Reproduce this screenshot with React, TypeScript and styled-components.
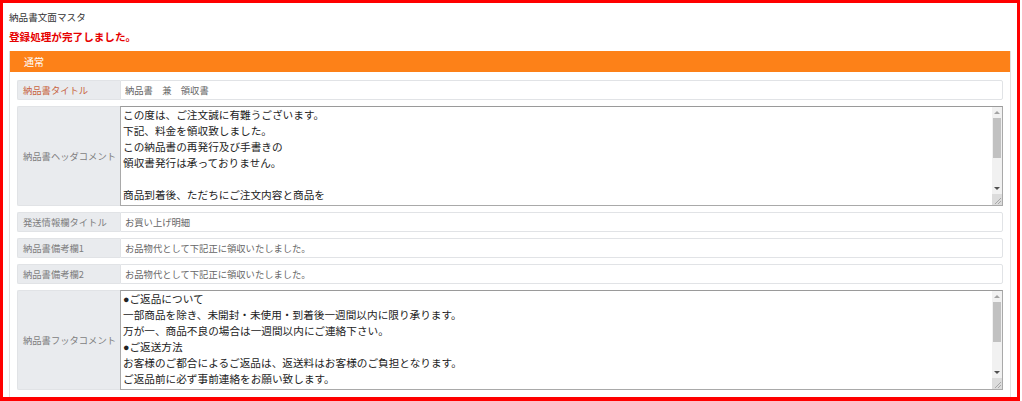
import styled, { createGlobalStyle } from 'styled-components';

const GlobalStyle = createGlobalStyle`
    html, body {
        margin: 0;
        padding: 0;
        background: #ffffff;
    }
    body {
        font-family: "Noto Sans CJK JP", "Noto Sans", sans-serif;
    }
`;

const headerComment = `この度は、ご注文誠に有難うございます。
下記、料金を領収致しました。
この納品書の再発行及び手書きの
領収書発行は承っておりません。

商品到着後、ただちにご注文内容と商品を
ご確認下さい。
万一、不備がございましたらご連絡下さい。`;

const footerComment = `●ご返品について
一部商品を除き、未開封・未使用・到着後一週間以内に限り承ります。
万が一、商品不良の場合は一週間以内にご連絡下さい。
●ご返送方法
お客様のご都合によるご返品は、返送料はお客様のご負担となります。
ご返品前に必ず事前連絡をお願い致します。
今後ともよろしくお願い申し上げます。`;

interface FieldRow {
    label: string;
    value: string;
    multi?: boolean;
    required?: boolean;
}

const rows: FieldRow[] = [
    { label: '納品書タイトル', value: '納品書　兼　領収書', required: true },
    { label: '納品書ヘッダコメント', value: headerComment, multi: true },
    { label: '発送情報欄タイトル', value: 'お買い上げ明細' },
    { label: '納品書備考欄1', value: 'お品物代として下記正に領収いたしました。' },
    { label: '納品書備考欄2', value: 'お品物代として下記正に領収いたしました。' },
    { label: '納品書フッタコメント', value: footerComment, multi: true },
];

// textarea scrollbar is drawn by hand so it looks the same as the classic one
const FakeScrollbar = () => (
    <ScrollBar>
        <ArrowButton>
            <UpArrow />
        </ArrowButton>
        <Track>
            <Thumb />
        </Track>
        <ArrowButton>
            <DownArrow />
        </ArrowButton>
        <Grip>
            <svg width="10" height="10" viewBox="0 0 10 10">
                <line x1="9" y1="3" x2="3" y2="9" stroke="#a8a8a8" strokeWidth="1" />
                <line x1="9" y1="6" x2="6" y2="9" stroke="#a8a8a8" strokeWidth="1" />
            </svg>
        </Grip>
    </ScrollBar>
);

const App = () => {
    return (
        <>
            <GlobalStyle />
            <Frame>
                <PageTitle>納品書文面マスタ</PageTitle>
                <Message>登録処理が完了しました。</Message>
                <Panel>
                    <PanelHeader>通常</PanelHeader>
                    <PanelBody>
                        {rows.map((row) => (
                            <Row key={row.label} $multi={row.multi}>
                                <Label $required={row.required}>{row.label}</Label>
                                {row.multi ? (
                                    <AreaWrap>
                                        <Area defaultValue={row.value} />
                                        <FakeScrollbar />
                                    </AreaWrap>
                                ) : (
                                    <TextInput defaultValue={row.value} />
                                )}
                            </Row>
                        ))}
                    </PanelBody>
                </Panel>
            </Frame>
        </>
    );
};

export default App;

const Frame = styled.div`
    box-sizing: border-box;
    width: 1020px;
    height: 401px;
    border: 3px solid #ff0000;
    border-bottom-width: 4px;
    padding: 7px 6px 0 6px;
    overflow: hidden;
    background: #ffffff;
`;

const PageTitle = styled.div`
    font-size: 9.6px;
    line-height: 14px;
    color: #333333;
`;

const Message = styled.div`
    margin-top: 6px;
    font-size: 10.6px;
    line-height: 14px;
    font-weight: bold;
    color: #e60000;
`;

const Panel = styled.div`
    margin-top: 7px;
    border: 1px solid #e2e2e2;
    border-top: none;
    background: #ffffff;
`;

const PanelHeader = styled.div`
    height: 21px;
    line-height: 21px;
    padding-left: 14px;
    background: #fd8118;
    color: #ffffff;
    font-size: 10px;
`;

const PanelBody = styled.div`
    display: flex;
    flex-direction: column;
    gap: 6px;
    padding: 8px 7px 8px 7px;
`;

interface RowProps {
    $multi?: boolean;
}

const Row = styled.div<RowProps>`
    display: grid;
    grid-template-columns: 103px 1fr;
    height: ${(props) => (props.$multi ? '100px' : '20px')};
`;

interface LabelProps {
    $required?: boolean;
}

const Label = styled.div<LabelProps>`
    display: flex;
    align-items: center;
    padding-left: 5px;
    background: #e9ebee;
    border: 1px solid #e1e3e6;
    border-right: none;
    border-radius: 2px 0 0 2px;
    font-size: 9.3px;
    color: ${(props) => (props.$required ? '#c8643f' : '#7e7e7e')};
    white-space: nowrap;
`;

const TextInput = styled.input`
    box-sizing: border-box;
    width: 100%;
    height: 20px;
    margin: 0;
    padding: 0 4px;
    border: 1px solid #e1e3e6;
    border-radius: 0 2px 2px 0;
    outline: none;
    font-family: "Noto Sans CJK JP", "Noto Sans", sans-serif;
    font-size: 9.3px;
    color: #666666;
    background: #ffffff;
`;

const AreaWrap = styled.div`
    position: relative;
    height: 100px;
`;

const Area = styled.textarea`
    display: block;
    box-sizing: border-box;
    width: 100%;
    height: 100px;
    margin: 0;
    padding: 0 12px 0 2px;
    border: 1px solid #a9a9a9;
    border-top-color: #9a9a9a;
    outline: none;
    resize: none;
    overflow: hidden;
    font-family: "Liberation Sans", "Noto Sans CJK JP", sans-serif;
    font-size: 10.65px;
    line-height: 16px;
    color: #222222;
    background: #ffffff;
`;

const ScrollBar = styled.div`
    position: absolute;
    top: 1px;
    right: 1px;
    bottom: 1px;
    width: 10px;
    display: flex;
    flex-direction: column;
    background: #f1f1f1;
`;

const ArrowButton = styled.div`
    height: 11px;
    display: flex;
    align-items: center;
    justify-content: center;
`;

const UpArrow = styled.div`
    width: 0;
    height: 0;
    border-left: 3px solid transparent;
    border-right: 3px solid transparent;
    border-bottom: 3px solid #a3a3a3;
`;

const DownArrow = styled.div`
    width: 0;
    height: 0;
    border-left: 3px solid transparent;
    border-right: 3px solid transparent;
    border-top: 3px solid #505050;
`;

const Track = styled.div`
    flex: 1;
    padding: 0 1px;
`;

const Thumb = styled.div`
    height: 40px;
    background: #c1c1c1;
`;

const Grip = styled.div`
    height: 11px;
    display: flex;
    align-items: flex-end;
    justify-content: flex-end;
    background: #dcdcdc;
`;
